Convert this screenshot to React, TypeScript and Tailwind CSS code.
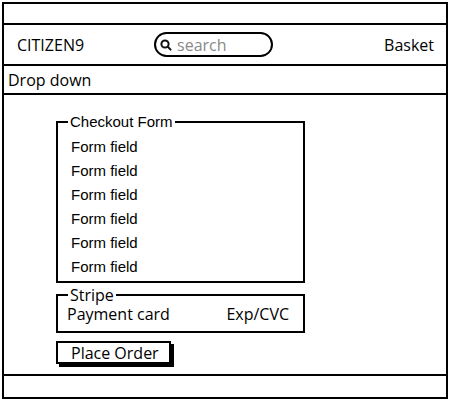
import React from 'react';

const sketch = { fontFamily: '"Open Sans", "Noto Sans", sans-serif' };
const plain = { fontFamily: '"Liberation Sans", Arial, sans-serif' };

const SearchIcon: React.FC = () => (
  <svg width="12" height="12" viewBox="0 0 12 12" fill="none" stroke="#111" strokeWidth="2" strokeLinecap="round">
    <circle cx="5" cy="5" r="3.6" />
    <path d="M7.8 7.8 L10.6 10.6" />
  </svg>
);

const App: React.FC = () => {
  const fields = ['Form field', 'Form field', 'Form field', 'Form field', 'Form field', 'Form field'];

  return (
    <div className="w-[450px] h-[400px] bg-white pt-[2px] pl-[2px] text-black">
      <div className="w-[446px] h-[397px] border-2 border-black flex flex-col">
        <div className="h-[21px] border-b-2 border-black" />

        <div className="h-[41px] border-b-2 border-black flex items-center pl-[13px] pr-[12px] font-medium" style={sketch}>
          <span className="text-[16px] leading-none">CITIZEN9</span>
          <div className="ml-[70px] w-[119px] h-[25px] border-2 border-black rounded-full flex items-center pl-[4px] gap-[5px]">
            <SearchIcon />
            <span className="text-[16px] leading-none text-[#8a8a8a]">search</span>
          </div>
          <span className="ml-auto text-[16px] leading-none">Basket</span>
        </div>

        <div className="h-[29px] border-b-2 border-black flex items-center pl-[4px] font-medium" style={sketch}>
          <span className="text-[16px] leading-none">Drop down</span>
        </div>

        <div className="flex-1 flex flex-col items-start pl-[52px]">
          <fieldset className="mt-[18px] w-[249px] border-2 border-black p-0 m-0" style={plain}>
            <legend className="ml-[10px] px-[2px] text-[15px] leading-[18px]">Checkout Form</legend>
            <div className="pl-[13px] pt-[4px] pb-[2px]">
              {fields.map((f, i) => (
                <div key={i} className="text-[15px] leading-[24px]">{f}</div>
              ))}
            </div>
          </fieldset>

          <fieldset className="mt-[5px] w-[249px] border-2 border-black p-0 m-0 font-medium" style={sketch}>
            <legend className="ml-[10px] px-[2px] text-[16px] leading-[14px]">Stripe</legend>
            <div className="flex justify-between pl-[9px] pr-[14px] pt-[3px] pb-[7px] text-[16px] leading-[19px]">
              <span>Payment card</span>
              <span>Exp/CVC</span>
            </div>
          </fieldset>

          <button
            className="mt-[8px] w-[115px] h-[23px] border-2 border-black bg-white shadow-[3px_3px_0_#000] text-left pl-[13px] text-[16px] leading-none font-medium"
            style={sketch}
          >
            Place Order
          </button>
        </div>

        <div className="h-[23px] border-t-2 border-black" />
      </div>
    </div>
  );
};

export default App;
